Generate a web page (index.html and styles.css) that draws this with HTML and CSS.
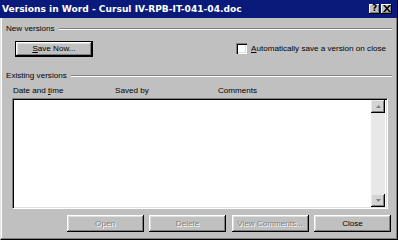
FILE: index.html
```html
<!DOCTYPE html>
<html>
<head>
<meta charset="utf-8">
<link rel="stylesheet" href="styles.css">
</head>
<body>
<div class="window">
  <div class="titlebar">
    <span class="title">Versions in Word - Cursul IV-RPB-IT-041-04.doc</span>
    <div class="tbtns">
      <span class="tbtn">?</span>
      <span class="tbtn x">
        <svg width="8" height="7" viewBox="0 0 8 7"><path d="M0 0h2l2 2.2L6 0h2L5 3.5 8 7H6L4 4.8 2 7H0l3-3.5z" fill="#000"/></svg>
      </span>
    </div>
  </div>
  <div class="content">
    <div class="group-label"><span>New versions</span><div class="sep"></div></div>
    <div class="newrow">
      <div class="btn default"><span><u>S</u>ave Now...</span></div>
      <label class="check"><span class="box"></span><span><u>A</u>utomatically save a version on close</span></label>
    </div>
    <div class="group-label second"><span>Existing versions</span><div class="sep"></div></div>
    <div class="headers">
      <span class="h1">Date and <u>t</u>ime</span>
      <span class="h2">Saved by</span>
      <span class="h3">Comments</span>
    </div>
    <div class="listbox">
      <div class="listarea"></div>
      <div class="scroll">
        <div class="sbtn"><svg width="5" height="3" viewBox="0 0 5 3"><path d="M2.5 0L5 3H0z" fill="#808080"/></svg></div>
        <div class="track"></div>
        <div class="sbtn"><svg width="5" height="3" viewBox="0 0 5 3"><path d="M0 0h5L2.5 3z" fill="#808080"/></svg></div>
      </div>
    </div>
    <div class="bottom">
      <div class="btn disabled">Open</div>
      <div class="btn disabled">Delete</div>
      <div class="btn disabled">View Comments...</div>
      <div class="btn">Close</div>
    </div>
  </div>
</div>
</body>
</html>
```
FILE: styles.css
```css
* { box-sizing: border-box; }
html, body { margin: 0; padding: 0; }
body { width: 398px; height: 240px; overflow: hidden; background: #c0c0c0; font-family: "Liberation Sans", Arial, sans-serif; font-size: 8.1px; color: #000; }
.window { width: 398px; height: 240px; background: #c0c0c0; border-left: 1px solid #e4e4e4; border-right: 1px solid #000; border-bottom: 1px solid #000; box-shadow: inset -1px -1px 0 #808080, inset 1px 0 0 #fff; display: flex; flex-direction: column; }
.titlebar { height: 18px; background: #0a1a7a; display: flex; align-items: center; justify-content: space-between; padding: 0 5px 1px 2px; margin-left: -1px; }
.title { color: #fff; font-family: "DejaVu Sans", Verdana, sans-serif; font-weight: bold; font-size: 9.1px; white-space: nowrap; }
.tbtns { display: flex; gap: 1px; }
.tbtn { width: 11px; height: 10px; background: #c0c0c0; box-shadow: inset -1px -1px 0 #000, inset 1px 1px 0 #fff, inset -2px -2px 0 #808080; display: flex; align-items: center; justify-content: center; font-weight: bold; font-size: 9px; line-height: 1; padding-bottom: 1px; font-family: "DejaVu Sans", sans-serif; }
.tbtn.x { padding: 0 0 1px 0; }
.tbtn svg { display: block; }
.content { flex: 1; display: flex; flex-direction: column; padding: 4px 5px 0 5px; }
.group-label { display: flex; align-items: center; gap: 4px; height: 12px; }
.group-label span { white-space: nowrap; }
.sep { flex: 1; height: 2px; border-top: 1px solid #808080; border-bottom: 1px solid #fff; margin-top: 1px; }
.newrow { display: flex; align-items: center; justify-content: space-between; height: 17px; margin-top: 6px; padding-left: 9px; padding-right: 6px; }
.btn { width: 77px; height: 17px; background: #c0c0c0; box-shadow: inset -1px -1px 0 #000, inset 1px 1px 0 #fff, inset -2px -2px 0 #808080, inset 2px 2px 0 #dfdfdf; display: flex; align-items: center; justify-content: center; white-space: nowrap; }
.btn.default { border: 1px solid #000; height: 16px; width: 78px; }
.btn.default span { padding: 0 2px; }
.check { display: flex; align-items: center; gap: 4px; white-space: nowrap; }
.box { width: 11px; height: 11px; background: #fff; box-shadow: inset 1px 1px 0 #808080, inset 2px 2px 0 #000, inset -1px -1px 0 #fff, inset -2px -2px 0 #dfdfdf; }
.group-label.second { margin-top: 12px; }
.headers { height: 12px; margin-top: 5px; margin-left: 7px; display: flex; }
.h1 { width: 102px; }
.h2 { width: 103px; }
.listbox { margin-left: 6px; margin-right: 4px; height: 111px; background: #fff; border-top: 1px solid #808080; border-left: 1px solid #808080; border-right: 1px solid #fff; border-bottom: 1px solid #fff; box-shadow: inset 1px 1px 0 #000, inset -1px -1px 0 #dfdfdf; display: flex; padding: 1px 2px 1px 1px; }
.listarea { flex: 1; }
.scroll { width: 14px; display: flex; flex-direction: column; background: #e8e8e8; }
.track { flex: 1; }
.sbtn { height: 13px; background: #d4d4d4; box-shadow: inset -1px -1px 0 #000, inset 1px 1px 0 #e8e8e8, inset -2px -2px 0 #808080; display: flex; align-items: center; justify-content: center; }
.sbtn svg { display: block; }
.bottom { display: flex; justify-content: flex-end; gap: 5.5px; margin-top: 6px; padding-right: 1px; }
.bottom .btn { width: 77px; height: 17px; }
.btn.disabled { color: #808080; text-shadow: 1px 1px 0 #fff; }
```
